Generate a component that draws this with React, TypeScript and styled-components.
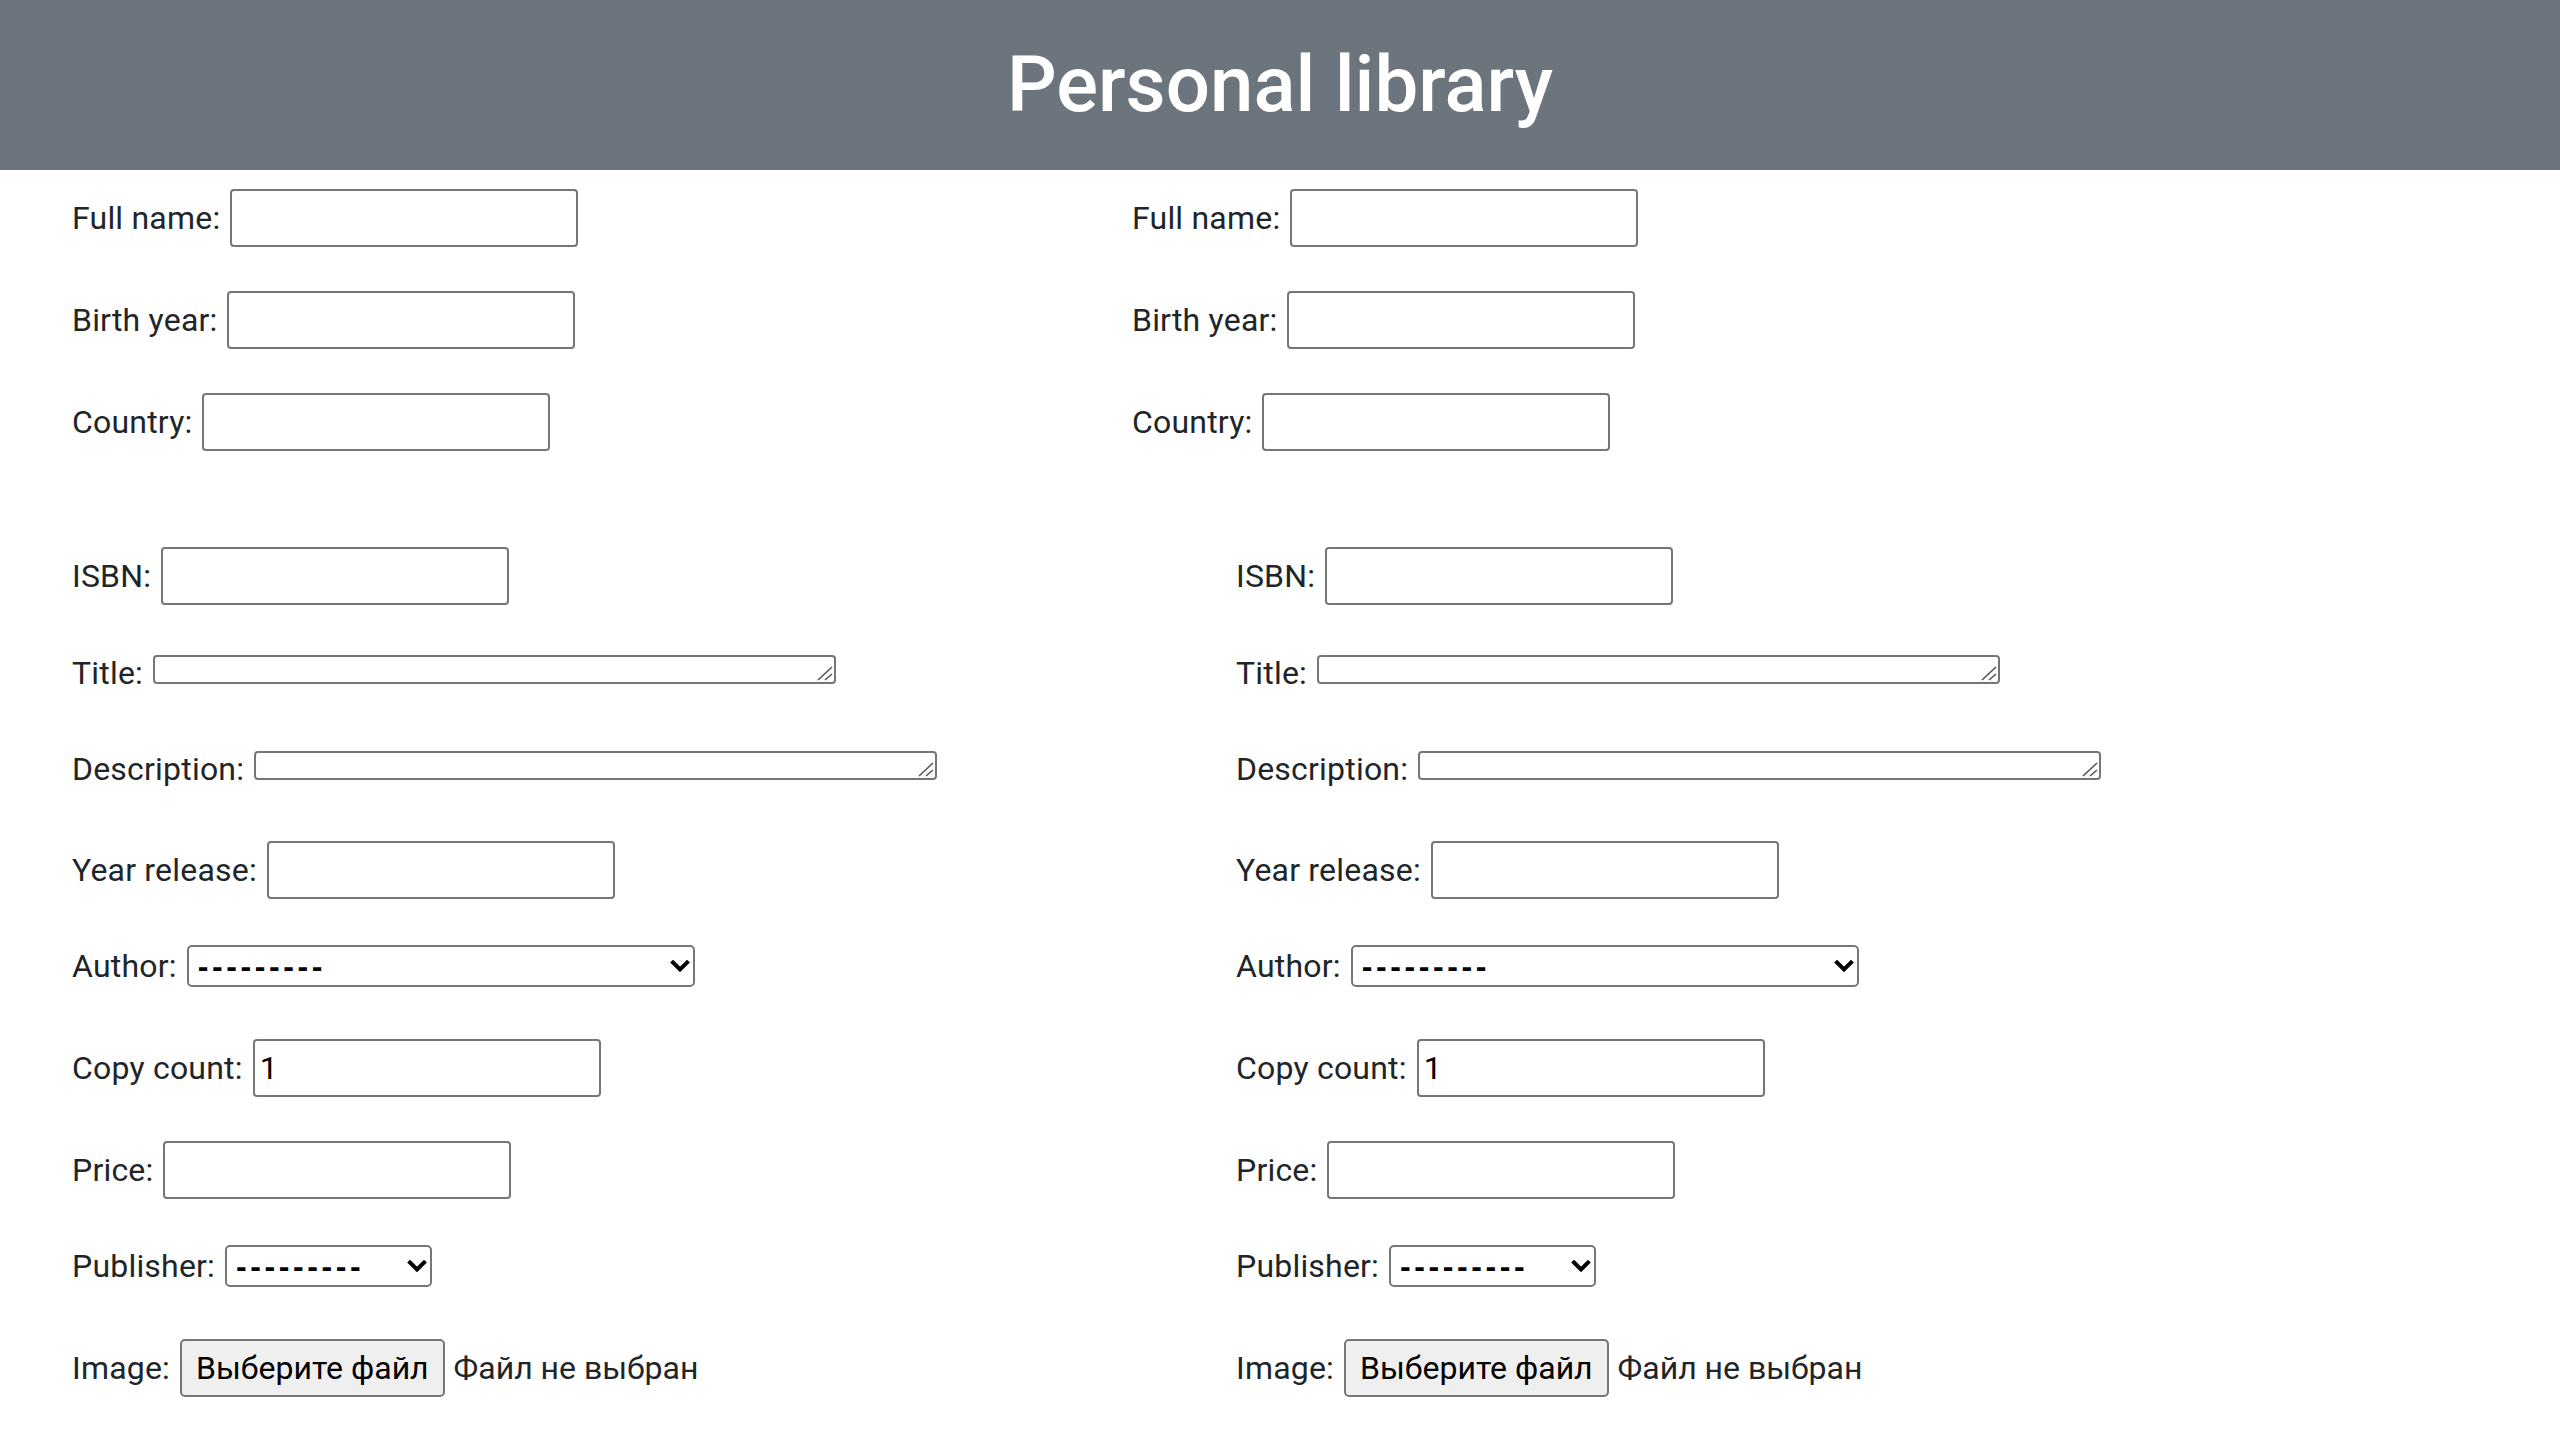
import styled, { createGlobalStyle } from 'styled-components';

type Kind = 'input' | 'textarea' | 'select' | 'file';

type FieldType = {
  label: string;
  kind: Kind;
  width?: number;
  value?: string;
};

const authorFields: FieldType[] = [
  { label: 'Full name:', kind: 'input' },
  { label: 'Birth year:', kind: 'input' },
  { label: 'Country:', kind: 'input' },
];

const bookFields: FieldType[] = [
  { label: 'ISBN:', kind: 'input' },
  { label: 'Title:', kind: 'textarea' },
  { label: 'Description:', kind: 'textarea' },
  { label: 'Year release:', kind: 'input' },
  { label: 'Author:', kind: 'select', width: 508 },
  { label: 'Copy count:', kind: 'input', value: '1' },
  { label: 'Price:', kind: 'input' },
  { label: 'Publisher:', kind: 'select', width: 207 },
  { label: 'Image:', kind: 'file' },
];

// vertical room around each kind of control
const spacing: Record<Kind, string> = {
  input: '19px 0 25px',
  file: '19px 0 25px',
  textarea: '23.5px 0 40.5px',
  select: '21px 0 33px',
};

const GlobalStyle = createGlobalStyle`
  body {
    margin: 0;
    font-family: Roboto, 'Liberation Sans', Arial, sans-serif;
    color: #212529;
    background: #fff;
  }
`;

const Chevron = () => (
  <ChevronIcon width="20" height="13" viewBox="0 0 20 13">
    <path d="M3 3 L10 10 L17 3" fill="none" stroke="#000" strokeWidth="4" strokeLinecap="square" />
  </ChevronIcon>
);

const ResizeGrip = () => (
  <GripIcon width="16" height="15" viewBox="0 0 16 15">
    <path d="M15 1 L1 14 M15 8 L8 14" fill="none" stroke="#555" strokeWidth="1.6" />
  </GripIcon>
);

const Control = ({ field }: { field: FieldType }) => {
  switch (field.kind) {
    case 'textarea':
      return (
        <AreaWrapper>
          <TextArea />
          <ResizeGrip />
        </AreaWrapper>
      );
    case 'select':
      return (
        <SelectWrapper>
          <Select $width={field.width ?? 300} defaultValue="">
            <option value="">---------</option>
          </Select>
          <Chevron />
        </SelectWrapper>
      );
    case 'file':
      return (
        <FilePicker>
          <FileButton type="button">Выберите файл</FileButton>
          <FileStatus>Файл не выбран</FileStatus>
        </FilePicker>
      );
    default:
      return <TextInput type="text" defaultValue={field.value} />;
  }
};

const FormColumn = ({ fields }: { fields: FieldType[] }) => (
  <Form>
    {fields.map((field) => (
      <Field key={field.label} $kind={field.kind}>
        <Label $low={field.kind === 'textarea'}>{field.label}</Label>
        <Control field={field} />
      </Field>
    ))}
  </Form>
);

export default function App() {
  return (
    <>
      <GlobalStyle />
      <Header>
        <Title>Personal library</Title>
      </Header>
      <Main>
        <Section $first={1060}>
          <FormColumn fields={authorFields} />
          <FormColumn fields={authorFields} />
        </Section>
        <Section $first={1164}>
          <FormColumn fields={bookFields} />
          <FormColumn fields={bookFields} />
        </Section>
      </Main>
    </>
  );
}

const Header = styled.header`
  height: 170px;
  background-color: #6c757d;
  display: flex;
  align-items: center;
  justify-content: center;
`;

const Title = styled.h1`
  margin: 0;
  color: #fff;
  font-size: 78px;
  font-weight: 500;
  line-height: 1.2;
`;

const Main = styled.main`
  display: flex;
  flex-direction: column;
  gap: 52px;
  padding-left: 72px;
`;

const Section = styled.div<{ $first: number }>`
  display: grid;
  grid-template-columns: ${(p) => p.$first}px 1fr;
`;

const Form = styled.form`
  display: flex;
  flex-direction: column;
`;

const Field = styled.div<{ $kind: Kind }>`
  display: flex;
  align-items: center;
  gap: 10px;
  padding: ${(p) => spacing[p.$kind]};
`;

const Label = styled.label<{ $low?: boolean }>`
  font-size: 32px;
  line-height: 1;
  letter-spacing: 0.2px;
  white-space: nowrap;
  margin: ${(p) => (p.$low ? '3px 0 -3px' : '0')};
`;

const TextInput = styled.input`
  box-sizing: border-box;
  width: 348px;
  height: 58px;
  margin: 0;
  padding: 0 5px;
  border: 2px solid #767676;
  border-radius: 4px;
  background: #fff;
  font-family: inherit;
  font-size: 32px;
  color: #000;
`;

const AreaWrapper = styled.div`
  position: relative;
  display: flex;
`;

const TextArea = styled.textarea`
  box-sizing: border-box;
  width: 683px;
  height: 29px;
  margin: 0;
  padding: 2px 4px;
  border: 2px solid #767676;
  border-radius: 4px;
  background: #fff;
  font-size: 14px;
  line-height: 1;
  resize: none;
`;

const GripIcon = styled.svg`
  position: absolute;
  right: 3px;
  bottom: 3px;
  pointer-events: none;
`;

const SelectWrapper = styled.div`
  position: relative;
  display: flex;
  align-items: center;
`;

const Select = styled.select<{ $width: number }>`
  box-sizing: border-box;
  width: ${(p) => p.$width}px;
  height: 42px;
  margin: 0;
  padding: 0 0 0 9px;
  appearance: none;
  border: 2px solid #767676;
  border-radius: 5px;
  background: #fff;
  font-family: 'Liberation Sans', Arial, sans-serif;
  font-size: 32px;
  font-weight: 600;
  letter-spacing: 3.6px;
  color: #000;
`;

const ChevronIcon = styled.svg`
  position: absolute;
  right: 5px;
  top: 50%;
  transform: translateY(-50%);
  pointer-events: none;
`;

const FilePicker = styled.div`
  display: flex;
  align-items: center;
  gap: 9px;
`;

const FileButton = styled.button`
  box-sizing: border-box;
  height: 58px;
  margin: 0;
  padding: 0 14px;
  border: 2px solid #767676;
  border-radius: 5px;
  background: #efefef;
  font-family: inherit;
  font-size: 32px;
  color: #000;
`;

const FileStatus = styled.span`
  font-size: 32px;
  line-height: 1;
  white-space: nowrap;
`;
